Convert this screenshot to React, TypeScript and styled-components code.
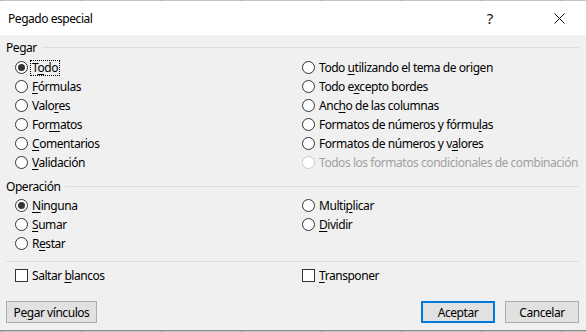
import React from "react";
import styled, { createGlobalStyle } from "styled-components";

const GlobalStyle = createGlobalStyle`
  html, body { margin: 0; padding: 0; background: #f0f0f0; }
  body { font-family: "Noto Sans", "Open Sans", sans-serif; font-size: 12px; color: #000; }
  #root { width: 586px; height: 332px; overflow: hidden; }
`;

const Page = styled.div`
  width: 586px;
  height: 332px;
  display: flex;
  flex-direction: column;
`;

const SheetStrip = styled.div<{ $h: number }>`
  height: ${(p) => p.$h}px;
  flex: none;
  background-color: #c4c4c4;
  background-image: repeating-linear-gradient(
    to right,
    #9a9a9a 0px,
    #9a9a9a 1px,
    transparent 1px,
    transparent 80px
  );
  background-position: 1px 0;
`;

const Dialog = styled.div`
  flex: 1;
  display: flex;
  flex-direction: column;
  background: #f0f0f0;
  border-bottom: 1px solid #8a8a8a;
`;

const TitleBar = styled.div`
  height: 34px;
  flex: none;
  background: #fff;
  display: flex;
  align-items: center;
  padding-left: 8px;
  padding-right: 4px;
`;

const Title = styled.div`
  flex: 1;
  font-size: 12px;
  letter-spacing: -0.45px;
  padding-top: 1px;
`;

const TitleButton = styled.div<{ $ml?: number }>`
  width: 46px;
  height: 34px;
  margin-left: ${(p) => p.$ml ?? 0}px;
  display: flex;
  align-items: center;
  justify-content: center;
  font-size: 15px;
  color: #111;
  font-family: "Noto Sans", sans-serif;
`;

const Body = styled.div`
  flex: 1;
  display: flex;
  flex-direction: column;
  padding: 4px 6px 7px 6px;
`;

const Legend = styled.div<{ $mt?: number }>`
  display: flex;
  align-items: center;
  height: 16px;
  margin-top: ${(p) => p.$mt ?? 0}px;
  letter-spacing: -0.45px;
`;

const LegendLine = styled.div`
  flex: 1;
  height: 1px;
  background: #dcdcdc;
  margin-left: 5px;
  margin-right: 1px;
`;

const OptionGrid = styled.div<{ $mt: number; $rows: number }>`
  display: grid;
  grid-template-columns: 287px 1fr;
  grid-auto-flow: column;
  grid-template-rows: repeat(${(p) => p.$rows}, 19px);
  margin-top: ${(p) => p.$mt}px;
  padding-left: 9px;
`;

const Option = styled.label<{ $disabled?: boolean }>`
  display: flex;
  align-items: center;
  height: 19px;
  gap: 3px;
  white-space: nowrap;
  letter-spacing: -0.45px;
  color: ${(p) => (p.$disabled ? "#a0a0a0" : "#000")};
`;

const RadioCircle = styled.span<{ $checked?: boolean; $disabled?: boolean }>`
  width: 13px;
  height: 13px;
  box-sizing: border-box;
  border-radius: 50%;
  border: 1px solid ${(p) => (p.$disabled ? "#cccccc" : "#333")};
  background: #fff;
  display: flex;
  align-items: center;
  justify-content: center;
  flex: none;
  &::after {
    content: "";
    width: 7px;
    height: 7px;
    border-radius: 50%;
    background: #333;
    display: ${(p) => (p.$checked ? "block" : "none")};
  }
`;

const CheckBox = styled.span`
  width: 13px;
  height: 13px;
  box-sizing: border-box;
  border: 1px solid #333;
  background: #fff;
  flex: none;
`;

const LabelText = styled.span<{ $focus?: boolean }>`
  padding: 0 1px;
  line-height: 14px;
  outline: ${(p) => (p.$focus ? "1px dotted #000" : "none")};
  outline-offset: 0;
  u { text-decoration-thickness: 1px; text-underline-offset: 2px; }
`;

const Separator = styled.div`
  height: 1px;
  background: #dcdcdc;
  margin: 8px 1px 0 0;
`;

const CheckRow = styled.div`
  display: grid;
  grid-template-columns: 287px 1fr;
  padding-left: 9px;
  margin-top: 4px;
`;

const Footer = styled.div`
  display: flex;
  align-items: center;
  margin-top: 16px;
  padding-right: 1px;
`;

const Spacer = styled.div`
  flex: 1;
`;

const Button = styled.button<{ $w: number; $default?: boolean }>`
  width: ${(p) => p.$w}px;
  height: 22px;
  box-sizing: border-box;
  background: #e1e1e1;
  border: ${(p) => (p.$default ? "2px solid #0078d7" : "1px solid #adadad")};
  font-family: "Noto Sans", sans-serif;
  font-size: 12px;
  letter-spacing: -0.45px;
  color: #000;
  padding: 0;
  u { text-decoration-thickness: 1px; text-underline-offset: 2px; }
`;

const ButtonGroup = styled.div`
  display: flex;
  gap: 10px;
`;

function Mn({ text }: { text: string }) {
  const i = text.indexOf("&");
  if (i < 0) return <>{text}</>;
  return (
    <>
      {text.slice(0, i)}
      <u>{text.charAt(i + 1)}</u>
      {text.slice(i + 2)}
    </>
  );
}

type Opt = { label: string; checked?: boolean; disabled?: boolean; focus?: boolean };

function Radio({ label, checked, disabled, focus }: Opt) {
  return (
    <Option $disabled={disabled}>
      <RadioCircle $checked={checked} $disabled={disabled} />
      <LabelText $focus={focus}>
        <Mn text={label} />
      </LabelText>
    </Option>
  );
}

function Check({ label }: { label: string }) {
  return (
    <Option>
      <CheckBox />
      <LabelText>
        <Mn text={label} />
      </LabelText>
    </Option>
  );
}

const pegar: Opt[] = [
  { label: "T&odo", checked: true, focus: true },
  { label: "&Fórmulas" },
  { label: "Valo&res" },
  { label: "For&matos" },
  { label: "&Comentarios" },
  { label: "&Validación" },
  { label: "Todo &utilizando el tema de origen" },
  { label: "Todo e&xcepto bordes" },
  { label: "Anc&ho de las columnas" },
  { label: "Formatos de números y fórmu&las" },
  { label: "Formatos de números y v&alores" },
  { label: "Todos los formatos condicionales de combinación", disabled: true },
];

const operacion: Opt[] = [
  { label: "&Ninguna", checked: true },
  { label: "&Sumar" },
  { label: "R&estar" },
  { label: "Multi&plicar" },
  { label: "&Dividir" },
  { label: "" },
];

export default function App() {
  return (
    <Page>
      <GlobalStyle />
      <SheetStrip $h={1} />
      <Dialog>
        <TitleBar>
          <Title>Pegado especial</Title>
          <TitleButton>?</TitleButton>
          <TitleButton $ml={23}>
            <svg width="11" height="11" viewBox="0 0 11 11">
              <path d="M0.5 0.5 L10.5 10.5 M10.5 0.5 L0.5 10.5" stroke="#111" strokeWidth="1" />
            </svg>
          </TitleButton>
        </TitleBar>
        <Body>
          <Legend>
            Pegar
            <LegendLine />
          </Legend>
          <OptionGrid $mt={3} $rows={6}>
            {pegar.map((o, i) => (
              <Radio key={i} {...o} />
            ))}
          </OptionGrid>
          <Legend $mt={6}>
            Operación
            <LegendLine />
          </Legend>
          <OptionGrid $mt={2} $rows={3}>
            {operacion.map((o, i) =>
              o.label ? <Radio key={i} {...o} /> : <span key={i} />
            )}
          </OptionGrid>
          <Separator />
          <CheckRow>
            <Check label="Saltar &blancos" />
            <Check label="&Transponer" />
          </CheckRow>
          <Footer>
            <Button $w={91}>
              Pe<u>g</u>ar vínculos
            </Button>
            <Spacer />
            <ButtonGroup>
              <Button $w={74} $default>
                Aceptar
              </Button>
              <Button $w={74}>Cancelar</Button>
            </ButtonGroup>
          </Footer>
        </Body>
      </Dialog>
      <SheetStrip $h={1} />
    </Page>
  );
}
